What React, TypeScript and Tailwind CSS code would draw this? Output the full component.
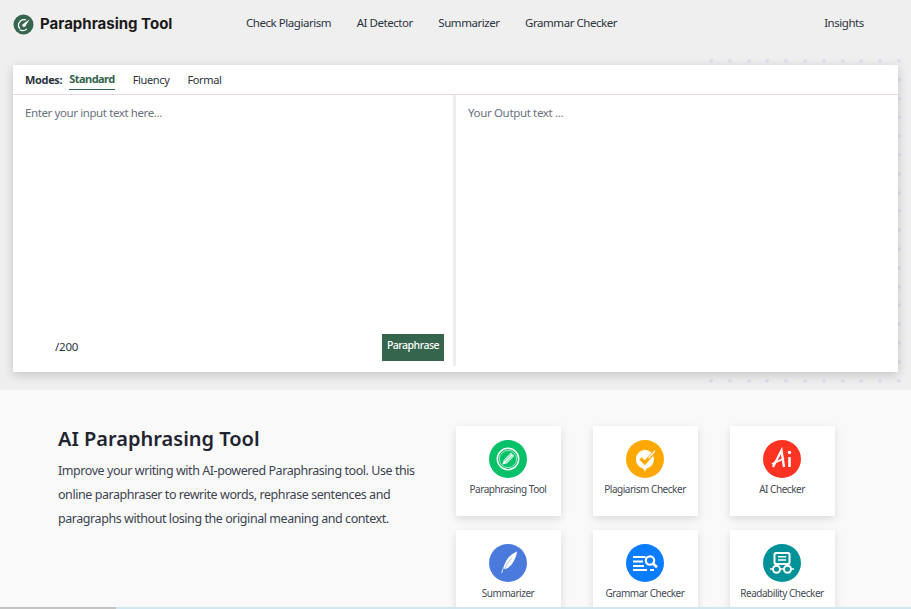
const navLinks = ['Check Plagiarism', 'AI Detector', 'Summarizer', 'Grammar Checker']

const LogoIcon = () => (
  <svg viewBox="0 0 22 22" className="h-[21px] w-[21px]">
    <circle cx="11" cy="11" r="10.5" fill="#35654d" />
    <path d="M13.500 6.200a6 6 0 0 0-7.800 6.300c.2 1.200.8 2.200 1.600 3" fill="none" stroke="#fff" strokeWidth="1.400" />
    <path d="M17.500 5.500 10.500 10.500c-1.300 1-1 3 .7 3.100 1.200.1 2-.8 2.300-1.800z" fill="#fff" />
    <path d="M7 16.500c2.200 1.200 5.500 1 7.500-1" fill="none" stroke="#fff" strokeWidth="1.200" />
  </svg>
)

const PenIcon = () => (
  <svg viewBox="0 0 38 38" className="h-full w-full">
    <circle cx="19" cy="19" r="19" fill="#06c167" />
    <circle cx="19" cy="19" r="10.700" fill="none" stroke="#fff" strokeWidth="1.500" />
    <circle cx="19" cy="19" r="8.600" fill="none" stroke="#fff" strokeWidth="0.600" />
    <path d="m13.500 24.500 1.300-4.500 7.200-7.200 3.200 3.200-7.200 7.200z" fill="#fff" />
    <path d="m15.500 21 6.800-6.800M17 22.500l6.800-6.800" stroke="#06c167" strokeWidth="0.800" />
  </svg>
)

const PlagiarismIcon = () => (
  <svg viewBox="0 0 38 38" className="h-full w-full">
    <circle cx="19" cy="19" r="19" fill="#ffa800" />
    <path d="M18.500 9.800a9.600 9.600 0 0 1 1.800 19l-1.300 3-1.700-3.100a9.600 9.600 0 0 1 1.200-18.900z" fill="#fff" />
    <path d="m14.500 18.500 4.300 4.300 10-11.500" fill="none" stroke="#ffa800" strokeWidth="3.400" />
    <path d="m22.500 18 6.300-7" fill="none" stroke="#fff" strokeWidth="1.400" />
  </svg>
)

const AiIcon = () => (
  <svg viewBox="0 0 38 38" className="h-full w-full">
    <circle cx="19" cy="19" r="19" fill="#ff3322" />
    <path d="M10 27 18.500 10.500 21 27" fill="none" stroke="#fff" strokeWidth="2.300" />
    <path d="M9 24 21 18.500" fill="none" stroke="#fff" strokeWidth="1.700" />
    <path d="M26.500 17v10" stroke="#fff" strokeWidth="2.600" />
    <circle cx="26.500" cy="12.500" r="1.700" fill="#fff" />
  </svg>
)

const FeatherIcon = () => (
  <svg viewBox="0 0 38 38" className="h-full w-full">
    <circle cx="19" cy="19" r="19" fill="#4a7bdc" />
    <path d="M28 7.500c-5.500 2-10.500 7-12.500 13-.6 2-.7 3.500-.3 4.800 3.500-.5 7-3.500 9.300-7.800 2-3.500 3.400-7 3.500-10z" fill="#fff" />
    <path d="M12.700 29c1.500-6 4.500-11 9.500-15.500" fill="none" stroke="#fff" strokeWidth="0.800" />
    <path d="M15 27c1-4.500 3.500-8.500 7.500-12.500" fill="none" stroke="#4a7bdc" strokeWidth="0.500" />
  </svg>
)

const GrammarIcon = () => (
  <svg viewBox="0 0 38 38" className="h-full w-full">
    <circle cx="19" cy="19" r="19" fill="#0a7cff" />
    <path d="M7 13h12.500M7 17.500h10M7 22h11M7 26h14M24 26h4" stroke="#fff" strokeWidth="2" />
    <circle cx="24" cy="16.500" r="4.200" fill="none" stroke="#fff" strokeWidth="2.200" />
    <path d="m27 19.500 4 3.800" stroke="#fff" strokeWidth="2.600" />
  </svg>
)

const ReadabilityIcon = () => (
  <svg viewBox="0 0 38 38" className="h-full w-full">
    <circle cx="19" cy="19" r="19" fill="#009299" />
    <rect x="11.500" y="9" width="15" height="11" rx="1.500" fill="none" stroke="#fff" strokeWidth="2" />
    <path d="M15 12.800h8M15 16h8" stroke="#fff" strokeWidth="1.400" />
    <path d="M14.500 20v2.500M23.500 20v2.500" stroke="#fff" strokeWidth="1.600" />
    <circle cx="13.500" cy="25.200" r="3.500" fill="none" stroke="#fff" strokeWidth="2" />
    <circle cx="24.500" cy="25.200" r="3.500" fill="none" stroke="#fff" strokeWidth="2" />
    <path d="M16.800 25h4.400M7 25h3M28 25h3" stroke="#fff" strokeWidth="1.600" />
  </svg>
)

const tools = [
  { label: 'Paraphrasing Tool', icon: <PenIcon /> },
  { label: 'Plagiarism Checker', icon: <PlagiarismIcon /> },
  { label: 'AI Checker', icon: <AiIcon /> },
  { label: 'Summarizer', icon: <FeatherIcon /> },
  { label: 'Grammar Checker', icon: <GrammarIcon /> },
  { label: 'Readability Checker', icon: <ReadabilityIcon /> },
]

// 11 x 18 dots, only the ones around the card stay visible
const dots = Array.from({ length: 198 }, (_, i) => i)

export default function App() {
  return (
    <div className="relative h-[609px] w-[911px] overflow-hidden bg-[#f9f9f9] font-['Noto_Sans',sans-serif] text-[#2b3440]">
      {/* top band */}
      <div className="relative h-[390px] bg-[#efefef]">
        {/* dotted decoration behind the card */}
        <div className="absolute left-[709px] top-[59px] grid grid-cols-[repeat(11,4px)] grid-rows-[repeat(18,4px)] gap-[14.8px]">
          {dots.map((d) => (
            <span key={d} className="h-[4px] w-[4px] rounded-full bg-[#dfdff3]" />
          ))}
        </div>

        <header className="relative flex h-[65px] items-start">
          <div className="flex w-[246px] items-center pl-[13px] pt-[13px]">
            <LogoIcon />
            <span className="ml-[6px] font-['Inter',sans-serif] text-[15px] font-bold leading-[22px] text-[#1a1a1a]">Paraphrasing Tool</span>
          </div>
          <nav className="flex gap-[25.5px] pt-[14px] text-[11.5px] leading-[18px] tracking-[-0.45px]">
            {navLinks.map((link) => (
              <span key={link}>{link}</span>
            ))}
          </nav>
          <span className="ml-[207px] pt-[14px] text-[11.5px] leading-[18px] tracking-[-0.45px]">Insights</span>
        </header>

        <main className="relative mx-[13px] flex h-[307px] flex-col bg-white shadow-[0_3px_10px_rgba(0,0,0,0.18)]">
          <div className="flex h-[30px] items-start border-b border-[#e6d9de] pl-[12px] text-[11px] tracking-[-0.35px]">
            <span className="pt-[7px] font-bold leading-[16px]">Modes:</span>
            <span className="ml-[7px] mt-[5px] h-[20px] border-b border-[#35654d] pt-[1px] font-bold leading-[16px] tracking-[-0.55px] text-[#35654d]">Standard</span>
            <span className="ml-[18px] pt-[7px] leading-[16px]">Fluency</span>
            <span className="ml-[18px] pt-[7px] leading-[16px]">Formal</span>
          </div>
          <div className="flex h-[271px]">
            <div className="flex w-[440px] flex-col justify-between pb-[5px] pl-[12px] pr-[9px] text-[11.5px] tracking-[-0.4px]">
              <p className="pt-[10px] leading-[16px] text-[#6b7280]">Enter your input text here...</p>
              <div className="flex items-center justify-between">
                <span className="mb-[1px] pl-[30px] tracking-[-0.2px]">/200</span>
                <button className="flex h-[27px] w-[62px] items-start justify-center bg-[#35654d] pt-[3px] text-[10.5px] font-medium leading-[16px] tracking-[-0.5px] text-white">Paraphrase</button>
              </div>
            </div>
            <div className="w-[3px] bg-[#eeeeee]" />
            <div className="flex-1 pl-[12px] pt-[10px] text-[11.5px] leading-[16px] tracking-[-0.35px] text-[#6b7280]">Your Output text ...</div>
          </div>
        </main>
      </div>

      {/* lower section */}
      <section className="flex h-[217px] items-start">
        <div className="w-[456px] pl-[58px] pt-[35px]">
          <h1 className="text-[20px] font-semibold leading-[28px] text-[#1f2430]">AI Paraphrasing Tool</h1>
          <p className="mt-[6px] w-[365px] text-[12.5px] leading-[24px] tracking-[-0.44px] text-[#3d4450]">
            Improve your writing with AI-powered Paraphrasing tool. Use this online paraphraser to rewrite words, rephrase sentences and paragraphs without losing the original meaning and context.
          </p>
        </div>
        <div className="mt-[36px] grid grid-cols-[105px_105px_105px] gap-x-[32px] gap-y-[14px]">
          {tools.map((tool) => (
            <div key={tool.label} className="flex h-[90px] flex-col items-center bg-white pr-[1px] pt-[14px] shadow-[0_3px_8px_rgba(0,0,0,0.12)]">
              <div className="h-[38px] w-[38px]">{tool.icon}</div>
              <span className="mt-[3px] whitespace-nowrap text-[10px] leading-[16px] tracking-[-0.47px] text-[#444b55]">{tool.label}</span>
            </div>
          ))}
        </div>
      </section>

      {/* page bottom edge */}
      <div className="absolute bottom-0 left-0 flex h-[2px] w-full">
        <div className="w-[116px] bg-[#c4c4c4]" />
        <div className="flex-1 bg-[#d2e6ef]" />
      </div>
    </div>
  )
}
